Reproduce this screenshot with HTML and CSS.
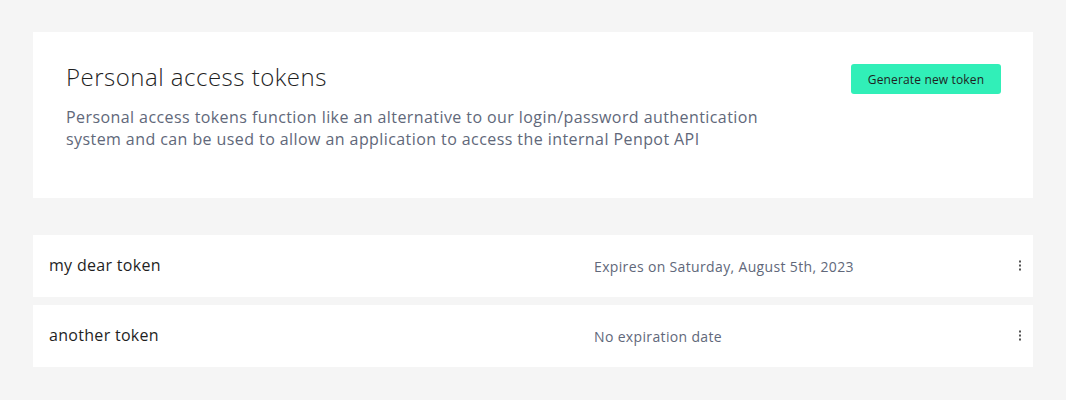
FILE: index.html
```html
<!DOCTYPE html>
<html>
<head>
<meta charset="utf-8">
<link rel="stylesheet" href="styles.css">
</head>
<body>
<main class="page">
  <section class="panel">
    <div class="panel-text">
      <h1 class="title">Personal access tokens</h1>
      <p class="desc">Personal access tokens function like an alternative to our login/password authentication system and can be used to allow an application to access the internal Penpot API</p>
    </div>
    <button class="btn-primary">Generate new token</button>
  </section>
  <section class="token-list">
    <div class="token-row">
      <div class="token-name">my dear token</div>
      <div class="token-exp">Expires on Saturday, August 5th, 2023</div>
      <div class="token-menu">
        <svg width="4" height="12" viewBox="0 0 4 12"><rect x="1" y="0.5" width="2" height="2" fill="#555"/><rect x="1" y="4.5" width="2" height="2" fill="#555"/><rect x="1" y="8.5" width="2" height="2" fill="#555"/></svg>
      </div>
    </div>
    <div class="token-row">
      <div class="token-name">another token</div>
      <div class="token-exp">No expiration date</div>
      <div class="token-menu">
        <svg width="4" height="12" viewBox="0 0 4 12"><rect x="1" y="0.5" width="2" height="2" fill="#555"/><rect x="1" y="4.5" width="2" height="2" fill="#555"/><rect x="1" y="8.5" width="2" height="2" fill="#555"/></svg>
      </div>
    </div>
  </section>
</main>
</body>
</html>
```
FILE: styles.css
```css
* { box-sizing: border-box; }
html, body { margin: 0; padding: 0; }
body {
  background: #f5f5f5;
  font-family: "Open Sans", "Noto Sans", sans-serif;
  width: 1066px;
  height: 400px;
  overflow: hidden;
}
.page {
  padding: 32px 33px;
  display: flex;
  flex-direction: column;
  gap: 37px;
}
.panel {
  background: #fff;
  height: 166px;
  padding: 30px 32px 0 33px;
  display: flex;
  justify-content: space-between;
  align-items: flex-start;
}
.title {
  margin: 0;
  font-size: 24px;
  font-weight: 300;
  letter-spacing: 0.5px;
  color: #1f1f1f;
  line-height: 30px;
}
.desc {
  margin: 14px 0 0;
  width: 740px;
  font-size: 16px;
  letter-spacing: 0.42px;
  line-height: 22px;
  color: #61687a;
}
.btn-primary {
  margin-top: 2px;
  width: 150px;
  height: 30px;
  border: none;
  border-radius: 3px;
  background: #31efb8;
  color: #1f1f1f;
  font-family: inherit;
  font-size: 12px;
  letter-spacing: 0.15px;
  padding: 0;
  cursor: pointer;
}
.token-list {
  display: flex;
  flex-direction: column;
  gap: 8px;
}
.token-row {
  background: #fff;
  height: 62px;
  display: flex;
  align-items: center;
  padding: 0 5px 0 16px;
}
.token-name {
  flex: 0 0 545px;
  font-size: 16px;
  letter-spacing: 0.3px;
  color: #1f1f1f;
  margin-bottom: 3px;
}
.token-exp {
  flex: 1;
  font-size: 14px;
  letter-spacing: 0.35px;
  color: #61687a;
}
.token-menu {
  width: 16px;
  display: flex;
  justify-content: center;
}
```
